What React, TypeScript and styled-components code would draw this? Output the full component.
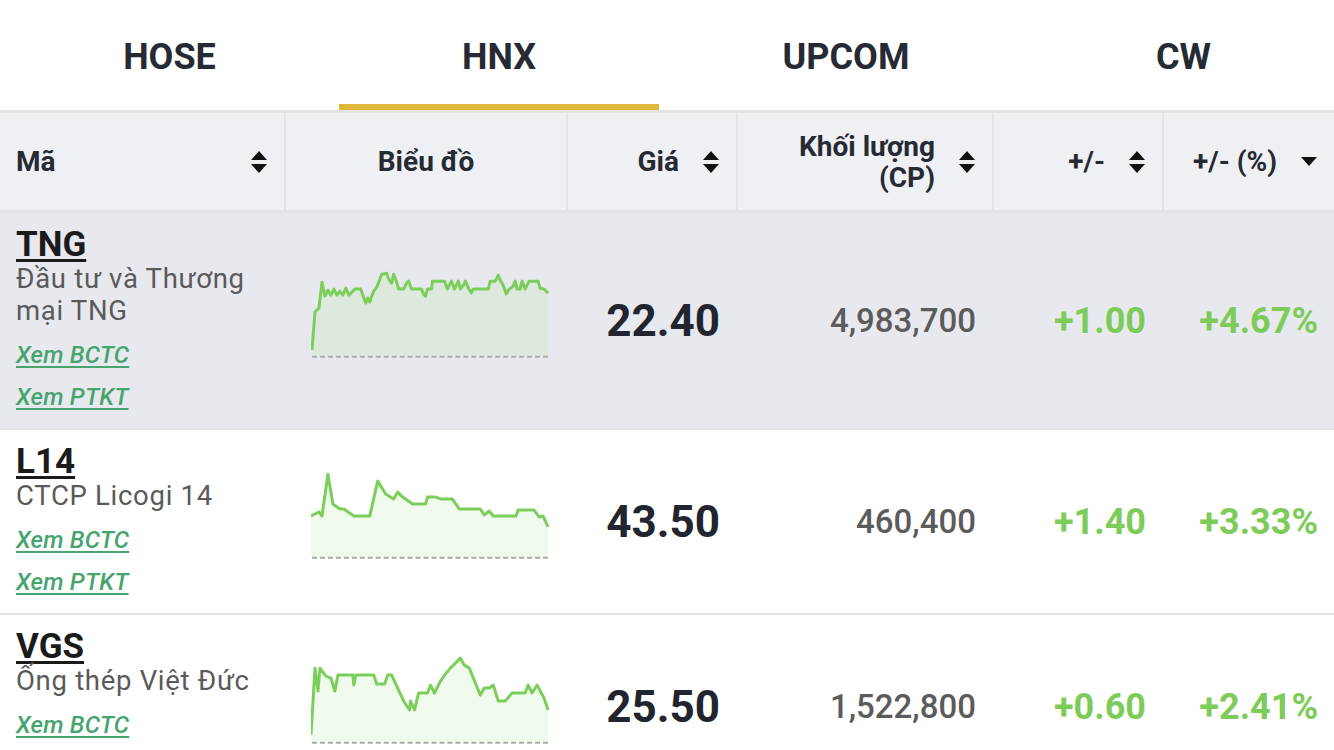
import styled, { createGlobalStyle } from "styled-components";

const GlobalStyle = createGlobalStyle`
    * { box-sizing: border-box; }
    body {
        margin: 0;
        background: #ffffff;
        font-family: Roboto, "Noto Sans", sans-serif;
        color: #262a33;
    }
`;

const COLS = "284px 280px 168px 254px 168px 170px";

const Page = styled.div`
    width: 1334px;
    height: 750px;
    overflow: hidden;
    background: #ffffff;
`;

const TabBar = styled.div`
    display: grid;
    grid-template-columns: 339px 320px 374px 301px;
    height: 110px;
    border-bottom: 3px solid #e3e3e4;
    box-sizing: content-box;
`;

const Tab = styled.div<{ $active?: boolean }>`
    display: flex;
    align-items: center;
    justify-content: center;
    font-size: 36px;
    font-weight: 700;
    color: #262a33;
    padding-top: 9px;
    border-bottom: 6px solid ${(p) => (p.$active ? "#dcb93b" : "transparent")};
`;

const HeadRow = styled.div`
    display: grid;
    grid-template-columns: ${COLS};
    column-gap: 2px;
    height: 100px;
    background: #e3e4e7;
    border-bottom: 3px solid #e3e4e7;
`;

const HeadCell = styled.div<{ $align?: "left" | "center" | "right" }>`
    background: #eff0f4;
    display: flex;
    align-items: center;
    justify-content: ${(p) =>
        p.$align === "left" ? "space-between" : p.$align === "center" ? "center" : "flex-end"};
    gap: 23px;
    padding: 0 16px;
    font-size: 28px;
    font-weight: 700;
    line-height: 31px;
    text-align: right;
    color: #262a33;
`;

const SortIcon = () => (
    <svg width="18" height="24" viewBox="0 0 18 24">
        <path d="M9 1 L17 10 L1 10 Z" fill="#111" />
        <path d="M9 23 L17 14 L1 14 Z" fill="#111" />
    </svg>
);

const DownIcon = () => (
    <svg width="18" height="24" viewBox="0 0 18 24">
        <path d="M9 16 L17 7 L1 7 Z" fill="#111" />
    </svg>
);

const Row = styled.div<{ $hl?: boolean }>`
    display: grid;
    grid-template-columns: ${COLS};
    column-gap: 2px;
    background: ${(p) => (p.$hl ? "#e8e9ee" : "#ffffff")};
    border-bottom: 2px solid #e3e3e5;
`;

const InfoCell = styled.div`
    display: flex;
    flex-direction: column;
    padding: 14px 16px 10px;
`;

const Ticker = styled.a`
    font-size: 35px;
    font-weight: 700;
    line-height: 36px;
    color: #1b1b1b;
    text-decoration: underline;
    text-decoration-thickness: 3px;
    text-underline-offset: 3px;
    align-self: flex-start;
`;

const Name = styled.div`
    font-size: 27.5px;
    line-height: 32px;
    color: #5a5a5a;
    letter-spacing: 0.7px;
    max-width: 250px;
`;

const Links = styled.div`
    display: flex;
    flex-direction: column;
    align-items: flex-start;
    padding-top: 7px;
`;

const Link = styled.a`
    font-size: 24px;
    font-style: italic;
    font-weight: 500;
    line-height: 42px;
    letter-spacing: 0.2px;
    color: #46a46e;
    text-decoration: underline;
    text-underline-offset: 3px;
`;

const ChartCell = styled.div`
    display: flex;
    align-items: center;
    padding: 0 16px 16px 25px;
`;

const NumCell = styled.div<{ $size: number; $color: string; $weight?: number }>`
    display: flex;
    align-items: center;
    justify-content: flex-end;
    padding-right: 16px;
    font-size: ${(p) => p.$size}px;
    font-weight: ${(p) => p.$weight ?? 700};
    color: ${(p) => p.$color};
`;

type Pt = [number, number];

const Spark = ({ pts, top, fill }: { pts: Pt[]; top: number; fill: string }) => {
    const rel = pts.map(([x, y]) => [x - 312, y - top] as Pt);
    const line = rel.map(([x, y], i) => `${i ? "L" : "M"}${x} ${y}`).join(" ");
    const last = rel[rel.length - 1];
    const area = `${line} L${last[0]} 91 L${rel[0][0]} 91 Z`;
    return (
        <svg width="240" height="94" viewBox="0 0 240 94">
            <path d={area} fill={fill} />
            <line x1="1" y1="91" x2="239" y2="91" stroke="#a9aca9" strokeWidth="2" strokeDasharray="5 3" />
            <path d={line} fill="none" stroke="#7cce5b" strokeWidth="3" strokeLinejoin="round" />
        </svg>
    );
};

const tng: Pt[] = [
    [313, 350], [316, 312], [320, 308], [323, 282], [326, 296], [329, 290], [332, 295], [335, 289],
    [338, 295], [341, 291], [344, 295], [347, 288], [350, 295], [353, 292], [356, 289], [362, 289],
    [365, 298], [367, 303], [369, 298], [371, 302], [373, 296], [375, 291], [378, 287], [380, 282],
    [383, 274], [388, 273], [390, 279], [393, 283], [395, 274], [398, 282], [400, 289], [405, 289],
    [408, 283], [410, 281], [413, 289], [423, 289], [425, 294], [427, 296], [429, 289], [433, 289],
    [434, 281], [446, 281], [449, 289], [451, 285], [453, 281], [456, 289], [458, 285], [460, 281],
    [462, 289], [465, 285], [467, 281], [470, 288], [473, 293], [475, 289], [490, 289], [492, 281],
    [497, 281], [500, 275], [502, 280], [505, 285], [508, 294], [511, 289], [515, 286], [517, 281],
    [519, 289], [522, 289], [524, 281], [527, 289], [531, 281], [540, 281], [542, 288], [546, 289],
    [550, 293],
];

const l14: Pt[] = [
    [312, 517], [320, 513], [323, 517], [329, 475], [334, 505], [341, 510], [345, 510], [355, 517],
    [371, 517], [379, 482], [387, 495], [395, 500], [399, 493], [404, 498], [414, 505], [427, 505],
    [429, 498], [437, 498], [443, 500], [454, 500], [461, 510], [482, 510], [486, 516], [491, 512],
    [495, 517], [518, 517], [520, 511], [536, 511], [541, 518], [545, 517], [550, 528],
];

const vgs: Pt[] = [
    [312, 737], [316, 670], [319, 693], [321, 670], [327, 678], [332, 680], [336, 693], [339, 677],
    [354, 677], [355, 687], [357, 677], [375, 677], [378, 686], [386, 686], [389, 677], [393, 677],
    [405, 703], [411, 712], [412, 703], [416, 712], [420, 695], [429, 695], [432, 687], [436, 695],
    [441, 685], [446, 677], [452, 670], [459, 663], [462, 660], [466, 667], [471, 670], [482, 697],
    [486, 690], [491, 690], [495, 687], [500, 703], [507, 703], [514, 695], [527, 695], [530, 687],
    [534, 695], [539, 687], [546, 700], [550, 712],
];

const stocks = [
    {
        code: "TNG", name: "Đầu tư và Thương mại TNG", links: ["Xem BCTC", "Xem PTKT"],
        price: "22.40", vol: "4,983,700", chg: "+1.00", pct: "+4.67%", pts: tng, top: 266, hl: true,
    },
    {
        code: "L14", name: "CTCP Licogi 14", links: ["Xem BCTC", "Xem PTKT"],
        price: "43.50", vol: "460,400", chg: "+1.40", pct: "+3.33%", pts: l14, top: 468, hl: false,
    },
    {
        code: "VGS", name: "Ống thép Việt Đức", links: ["Xem BCTC", "Xem PTKT"],
        price: "25.50", vol: "1,522,800", chg: "+0.60", pct: "+2.41%", pts: vgs, top: 654, hl: false,
    },
];

export default function App() {
    return (
        <Page>
            <GlobalStyle />
            <TabBar>
                <Tab>HOSE</Tab>
                <Tab $active>HNX</Tab>
                <Tab>UPCOM</Tab>
                <Tab>CW</Tab>
            </TabBar>
            <HeadRow>
                <HeadCell $align="left">
                    <span>Mã</span>
                    <SortIcon />
                </HeadCell>
                <HeadCell $align="center">Biểu đồ</HeadCell>
                <HeadCell>
                    <span>Giá</span>
                    <SortIcon />
                </HeadCell>
                <HeadCell>
                    <span>
                        Khối lượng
                        <br />
                        (CP)
                    </span>
                    <SortIcon />
                </HeadCell>
                <HeadCell>
                    <span>+/-</span>
                    <SortIcon />
                </HeadCell>
                <HeadCell>
                    <span>+/- (%)</span>
                    <DownIcon />
                </HeadCell>
            </HeadRow>
            {stocks.map((s) => (
                <Row key={s.code} $hl={s.hl}>
                    <InfoCell>
                        <Ticker>{s.code}</Ticker>
                        <Name>{s.name}</Name>
                        <Links>
                            {s.links.map((l) => (
                                <Link key={l}>{l}</Link>
                            ))}
                        </Links>
                    </InfoCell>
                    <ChartCell>
                        <Spark pts={s.pts} top={s.top} fill={s.hl ? "#dde9dc" : "#f1fbed"} />
                    </ChartCell>
                    <NumCell $size={44} $color="#22252e">{s.price}</NumCell>
                    <NumCell $size={33} $weight={500} $color="#5b5b5b">{s.vol}</NumCell>
                    <NumCell $size={36} $color="#7dcb59">{s.chg}</NumCell>
                    <NumCell $size={36} $color="#7dcb59">{s.pct}</NumCell>
                </Row>
            ))}
        </Page>
    );
}
